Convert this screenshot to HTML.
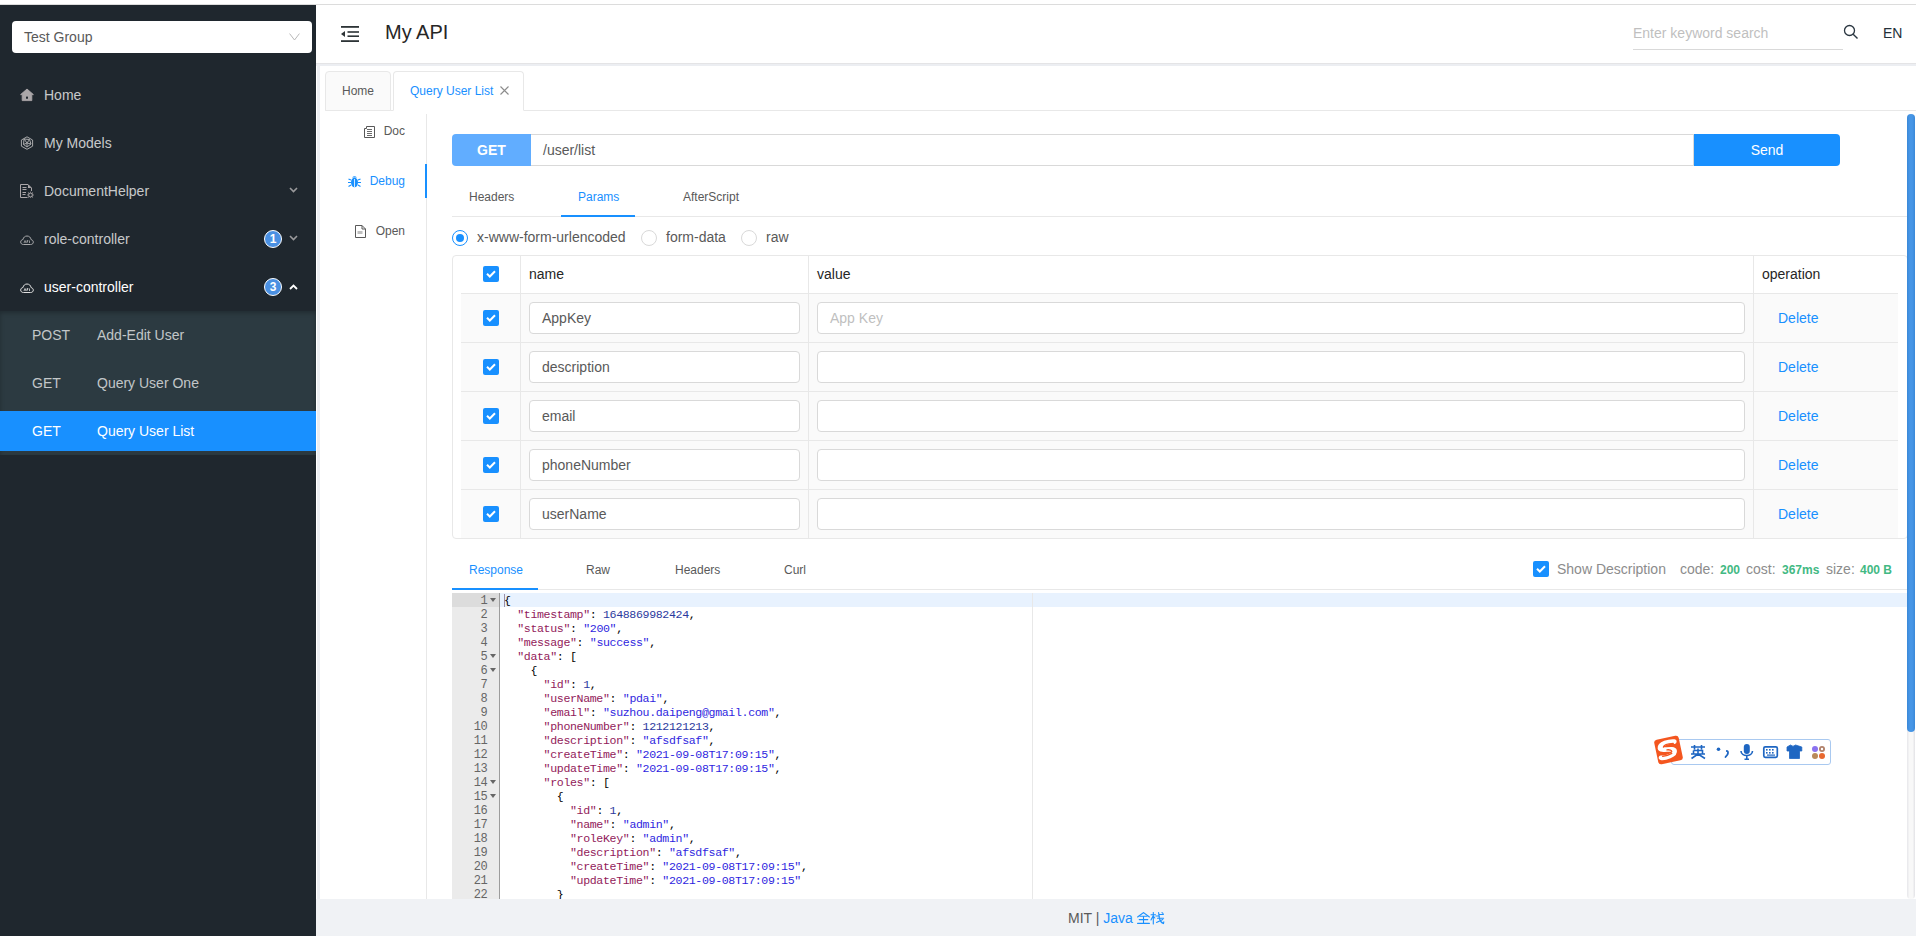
<!DOCTYPE html>
<html><head><meta charset="utf-8">
<style>
*{box-sizing:border-box;margin:0;padding:0}
html,body{width:1916px;height:936px;overflow:hidden;background:#fff;font-family:"Liberation Sans",sans-serif;color:#595959}
.abs{position:absolute}
#topline{left:0;top:4px;width:1916px;height:1px;background:#dcdcdc}
#side{left:0;top:5px;width:316px;height:931px;background:#1f272e}
#sel{left:12px;top:16px;width:300px;height:32px;background:#fff;border-radius:4px;font-size:14px;color:#595959;line-height:32px;padding-left:12px}
#sel svg{position:absolute;right:12px;top:12px}
.mi{position:absolute;left:0;width:316px;height:40px;line-height:40px;font-size:14px;color:rgba(255,255,255,0.76)}
.mi .ic{position:absolute;left:20px;top:13px;width:14px;height:14px}
.mi .tx{position:absolute;left:44px;top:0}
.mi .arr{position:absolute;left:289px;top:16px}
.badge{position:absolute;left:264px;top:11px;width:18px;height:18px;border-radius:50%;background:#4a90e2;border:1px solid #fff;color:#fff;font-size:12px;line-height:16px;text-align:center;font-weight:bold}
#sub{left:0;top:307px;width:316px;height:144px;background:#2c3a41;box-shadow:inset 0 2px 4px rgba(0,0,0,0.25)}
.si{position:absolute;left:0;width:316px;height:40px;line-height:40px;font-size:14px;color:rgba(255,255,255,0.72)}
.si .m{position:absolute;left:32px}
.si .nm{position:absolute;left:97px}
.si.act{background:#1890ff;color:#fff}
#header{left:316px;top:5px;width:1600px;height:58px;background:#fff}
#gb1{left:316px;top:63px;width:1600px;height:3px;background:#eceef2;border-top:1px solid #e4e4e6}
#gb2{left:317px;top:64px;width:3px;height:835px;background:#eceef2}
#footer{left:316px;top:899px;width:1600px;height:37px;background:#f0f2f5;font-size:14px;text-align:center;line-height:37px;color:#595959}

#hdr-icon{left:341px;top:26px}
#title{left:385px;top:18px;font-size:20px;color:#262626;line-height:28px}
#search{left:1633px;top:22px;width:210px;height:28px;border-bottom:1px solid #d9d9d9;font-size:14px;color:#bfbfbf;line-height:22px}
#sicon{left:1843px;top:24px}
#lang{left:1883px;top:24px;font-size:14px;color:#24303a;line-height:18px}
#tabbar-line{left:325px;top:110px;width:1591px;height:1px;background:#e8e8e8}
.ptab{position:absolute;top:71px;height:40px;border:1px solid #e8e8e8;border-radius:4px 4px 0 0;font-size:12px;line-height:38px;text-align:center}
#vdiv{left:426px;top:114px;width:1px;height:785px;background:#e8e8e8}
.dtab{position:absolute;left:320px;width:106px;height:34px;line-height:34px;font-size:12px;text-align:right;padding-right:21px;color:#595959}
.dtab svg{position:absolute;top:11px}
#inkbar{left:425px;top:164px;width:2px;height:34px;background:#1890ff}
#get{left:452px;top:134px;width:79px;height:32px;background:#61adff;border-radius:4px 0 0 4px;color:#fff;font-weight:bold;font-size:14px;text-align:center;line-height:32px}
#url{left:531px;top:134px;width:1163px;height:32px;border:1px solid #d9d9d9;border-left:none;font-size:14px;color:#595959;line-height:30px;padding-left:12px}
#send{left:1694px;top:134px;width:146px;height:32px;background:#1890ff;border-radius:0 4px 4px 0;color:#fff;font-size:14px;text-align:center;line-height:32px}
.rtab{position:absolute;font-size:12px;line-height:16px;color:#595959}
#pline{left:452px;top:216px;width:1455px;height:1px;background:#e8e8e8}
#pink{left:561px;top:215px;width:74px;height:2px;background:#1890ff}
.radio{position:absolute;top:230px;width:16px;height:16px;border:1px solid #d9d9d9;border-radius:50%;background:#fff}
.radio.on{border-color:#1890ff}
.radio.on:after{content:"";position:absolute;left:3px;top:3px;width:8px;height:8px;border-radius:50%;background:#1890ff}
.rlab{position:absolute;top:228px;font-size:14px;line-height:18px;color:#595959}
#scroll{left:1907px;top:114px;width:8px;height:785px;background:linear-gradient(to right,#e6e6ea,#f8f8f8 30%,#f8f8f8 70%,#e2e2e6);border-radius:4px}
#thumb{left:1907px;top:114px;width:8px;height:618px;background:linear-gradient(to right,#3a88d8,#4796e6 35%,#4796e6 65%,#3a88d8);border-radius:4px}

#tbl{left:452px;top:255px;width:1456px;height:284px;border:1px solid #e8e8e8;border-radius:4px;background:#fff}
.cdiv{position:absolute;width:1px;background:#e8e8e8}
.hrow{position:absolute;left:452px;height:1px;background:#e8e8e8}
.body{position:absolute;left:461px;width:1437px;height:48px;background:#fafafa}
.cb{position:absolute;left:483px;width:16px;height:16px;background:#1890ff;border-radius:2px}
.cb svg{position:absolute;left:3px;top:4px}
.th{position:absolute;top:266px;font-size:14px;line-height:16px;color:#262626}
.inp{position:absolute;height:32px;border:1px solid #d9d9d9;border-radius:4px;background:#fff;font-size:14px;line-height:30px;padding-left:12px;color:#595959}
.del{position:absolute;left:1778px;font-size:14px;line-height:16px;color:#1890ff}

#rline{left:452px;top:589px;width:1455px;height:1px;background:#e8e8e8}
#rink{left:452px;top:588px;width:86px;height:2px;background:#1890ff}
.stat{position:absolute;top:561px;font-size:14px;line-height:16px;color:#8c8c8c}
.stat.grn{color:#42b983;font-weight:bold;font-size:12px;top:562px}
#editor{left:452px;top:593px;width:1455px;height:306px;background:#fff;overflow:hidden}
#gutter{position:absolute;left:0;top:0;width:48px;height:306px;background:#ebebeb;border-right:1px solid #9c9c9c}
#pm{position:absolute;left:580px;top:0;width:1px;height:306px;background:#e8e8e8}
#actl{position:absolute;left:48px;top:0;width:1407px;height:14px;background:#e8f2fe}
#actg{position:absolute;left:0;top:0;width:47px;height:14px;background:#dcdcdc}
.ln{position:absolute;left:0;width:35px;margin-top:1px;text-align:right;font-family:"Liberation Mono",monospace;font-size:12px;letter-spacing:-0.6px;line-height:14px;color:#666}
.fold{position:absolute;left:38px;width:0;height:0;border-left:3px solid transparent;border-right:3px solid transparent;border-top:4px solid #666}
.cl{position:absolute;left:52px;margin-top:1px;white-space:pre;font-family:"Liberation Mono",monospace;font-size:11.6px;line-height:14px;color:#000;letter-spacing:-0.36px}
.jk{color:#921a5a}.js{color:#2f1fe0}.jn{color:#2b3a9e}
</style></head><body>
<div id="topline" class="abs"></div>
<div id="side" class="abs">
  <div id="sel" class="abs">Test Group
    <svg width="11" height="8" viewBox="0 0 11 8"><path d="M0.6 0.6 L5.5 7 L10.4 0.6" fill="none" stroke="#b8b8b8" stroke-width="1"/></svg>
  </div>
  <div class="mi" style="top:70px"><svg class="ic" viewBox="0 0 14 14"><path d="M7 1 L0.6 6.6 L2.2 6.6 L2.2 12.6 L11.8 12.6 L11.8 6.6 L13.4 6.6 Z" fill="#aba7a9" stroke="#aba7a9" stroke-width="0.9" stroke-linejoin="round"/><rect x="6" y="8.6" width="2" height="2.2" rx="0.6" fill="#1f272e"/></svg><span class="tx">Home</span></div>
  <div class="mi" style="top:118px"><svg class="ic" viewBox="0 0 14 14"><g fill="none" stroke="#a8a9ab" stroke-width="1"><path d="M7 0.8 L12.6 4 L12.6 10.2 L7 13.3 L1.4 10.2 L1.4 4 Z"/><path d="M4 3 L9.5 3.5 L11 8 L7 11 L3.5 8.5 Z"/><path d="M4 3 L7 7 L9.5 3.5 M7 7 L7 11 M3.5 8.5 L7 7 L11 8"/></g></svg><span class="tx">My Models</span></div>
  <div class="mi" style="top:166px"><svg class="ic" viewBox="0 0 14 14"><g fill="none" stroke="#aba7a9" stroke-width="1"><path d="M7.5 13.5 L0.5 13.5 L0.5 0.5 L8 0.5 L11.5 4 L11.5 7"/><path d="M2.5 3.5 L6.5 3.5 M2.5 5.5 L6.5 5.5 M2.5 8.5 L6 8.5 M2.5 10.5 L5.5 10.5"/><circle cx="10.5" cy="11" r="1.9"/><path d="M10.5 7.8 L10.5 8.6 M10.5 13.4 L10.5 14.2 M7.3 11 L8.1 11 M12.9 11 L13.7 11 M8.2 8.7 L8.8 9.3 M12.2 12.7 L12.8 13.3 M8.2 13.3 L8.8 12.7 M12.2 9.3 L12.8 8.7" stroke-width="1.1"/></g><path d="M8 0.5 L11.5 4 L8 4 Z" fill="#aba7a9"/></svg><span class="tx">DocumentHelper</span><svg class="arr" width="9" height="6" viewBox="0 0 9 6"><path d="M1 1 L4.5 4.5 L8 1" fill="none" stroke="#9a9a9c" stroke-width="1.6"/></svg></div>
  <div class="mi" style="top:214px"><svg class="ic" viewBox="0 0 14 14" style="top:14px"><path d="M3.5 11.5 C1.5 11.5 0.7 10.3 0.7 9 C0.7 7.6 1.8 6.6 3 6.6 C3.3 4.3 5 3 7 3 C9.2 3 10.8 4.5 11 6.6 C12.3 6.8 13.3 7.8 13.3 9.1 C13.3 10.4 12.4 11.5 10.6 11.5 Z" fill="none" stroke="#a8a9ab" stroke-width="1"/><path d="M4 10 L5 7.5 L6 10 M7 10 L7 7.5 L8.2 7.8 L7 8.8 M9.5 7.5 L9.5 10" fill="none" stroke="#a8a9ab" stroke-width="0.8"/></svg><span class="tx">role-controller</span><div class="badge">1</div><svg class="arr" width="9" height="6" viewBox="0 0 9 6"><path d="M1 1 L4.5 4.5 L8 1" fill="none" stroke="#9a9a9c" stroke-width="1.6"/></svg></div>
  <div class="mi" style="top:262px;color:#fff"><svg class="ic" viewBox="0 0 14 14" style="top:14px"><path d="M3.5 11.5 C1.5 11.5 0.7 10.3 0.7 9 C0.7 7.6 1.8 6.6 3 6.6 C3.3 4.3 5 3 7 3 C9.2 3 10.8 4.5 11 6.6 C12.3 6.8 13.3 7.8 13.3 9.1 C13.3 10.4 12.4 11.5 10.6 11.5 Z" fill="none" stroke="#e0e0e0" stroke-width="1"/><path d="M4 10 L5 7.5 L6 10 M7 10 L7 7.5 L8.2 7.8 L7 8.8 M9.5 7.5 L9.5 10" fill="none" stroke="#e0e0e0" stroke-width="0.8"/></svg><span class="tx">user-controller</span><div class="badge">3</div><svg class="arr" width="9" height="6" viewBox="0 0 9 6" style="top:17px"><path d="M1 5 L4.5 1.5 L8 5" fill="none" stroke="#ffffff" stroke-width="1.8"/></svg></div>
  <div id="sub" class="abs" style="top:306px;height:144px">
    <div class="si" style="top:4px"><span class="m">POST</span><span class="nm">Add-Edit User</span></div>
    <div class="si" style="top:52px"><span class="m">GET</span><span class="nm">Query User One</span></div>
    <div class="si act" style="top:100px"><span class="m">GET</span><span class="nm">Query User List</span></div>
  </div>
</div>
<div id="header" class="abs"></div>
<div id="gb1" class="abs"></div>
<div id="gb2" class="abs"></div>

<svg id="hdr-icon" class="abs" width="18" height="16" viewBox="0 0 18 16"><g fill="#2d3436"><rect x="0" y="0" width="18" height="1.8"/><rect x="6.5" y="5.2" width="11.5" height="1.6"/><rect x="6.5" y="9.4" width="11.5" height="1.6"/><rect x="0" y="14.2" width="18" height="1.8"/><path d="M0 8 L4 5 L4 11 Z"/></g></svg>
<div id="title" class="abs">My API</div>
<div id="search" class="abs">Enter keyword search</div>
<svg id="sicon" class="abs" width="16" height="16" viewBox="0 0 16 16"><circle cx="6.5" cy="6.5" r="5" fill="none" stroke="#2a3640" stroke-width="1.3"/><path d="M10.2 10.2 L14.5 14.5" stroke="#2a3640" stroke-width="1.4"/></svg>
<div id="lang" class="abs">EN</div>
<div id="tabbar-line" class="abs"></div>
<div class="ptab" style="left:325px;width:66px;background:#fafafa;color:#595959">Home</div>
<div class="ptab" style="left:393px;width:131px;background:#fff;color:#1890ff;border-bottom-color:#fff;text-align:left;padding-left:16px">Query User List <svg width="9" height="9" viewBox="0 0 9 9" style="margin-left:3px"><path d="M0.5 0.5 L8.5 8.5 M8.5 0.5 L0.5 8.5" stroke="#8c8c8c" stroke-width="1.1"/></svg></div>
<div id="vdiv" class="abs"></div>
<div class="dtab" style="top:114px">Doc<svg style="left:44px;top:12px" width="11" height="12" viewBox="0 0 11 12"><g fill="none" stroke="#595959" stroke-width="1"><path d="M2.5 0.5 L10.5 0.5 L10.5 11.5 L0.5 11.5 L0.5 2.5 L2.5 2.5 Z"/><path d="M3 3.5 L8 3.5 M3 5.5 L8 5.5 M3 7.5 L8 7.5 M3 9.5 L8 9.5" stroke-width="0.9"/></g></svg></div>
<div class="dtab" style="top:164px;color:#1890ff">Debug<svg style="left:28px;top:11px" width="13" height="13" viewBox="0 0 13 13"><g fill="#1890ff"><ellipse cx="6.5" cy="7.5" rx="3.5" ry="4.8"/><path d="M4 2.5 Q6.5 0 9 2.5 Z"/></g><g stroke="#1890ff" stroke-width="1.2" fill="none"><path d="M0.5 4 L3 5 M12.5 4 L10 5 M0 7.5 L3 7.5 M13 7.5 L10 7.5 M0.5 11.5 L3 10 M12.5 11.5 L10 10"/></g><path d="M6.5 4 L6.5 12" stroke="#fff" stroke-width="0.8"/></svg></div>
<div class="dtab" style="top:214px">Open<svg style="left:35px" width="11" height="13" viewBox="0 0 11 13"><g fill="none" stroke="#595959" stroke-width="1"><path d="M0.5 0.5 L7 0.5 L10.5 4 L10.5 12.5 L0.5 12.5 Z"/><path d="M7 0.5 L7 4 L10.5 4"/></g><rect x="2.5" y="6" width="5" height="3" fill="#bfbfbf"/></svg></div>
<div id="inkbar" class="abs"></div>
<div id="get" class="abs">GET</div>
<div id="url" class="abs">/user/list</div>
<div id="send" class="abs">Send</div>
<div class="rtab" style="left:469px;top:189px">Headers</div>
<div class="rtab" style="left:578px;top:189px;color:#1890ff">Params</div>
<div class="rtab" style="left:683px;top:189px">AfterScript</div>
<div id="pline" class="abs"></div>
<div id="pink" class="abs"></div>
<div class="radio on" style="left:452px"></div><div class="rlab" style="left:477px">x-www-form-urlencoded</div>
<div class="radio" style="left:641px"></div><div class="rlab" style="left:666px">form-data</div>
<div class="radio" style="left:741px"></div><div class="rlab" style="left:766px">raw</div>
<div id="tbl" class="abs"></div>
<div class="body" style="top:294px"></div>
<div class="body" style="top:343px"></div>
<div class="body" style="top:392px"></div>
<div class="body" style="top:441px"></div>
<div class="body" style="top:490px"></div>
<div class="hrow" style="left:461px;top:293px;width:1437px"></div>
<div class="hrow" style="left:461px;top:342px;width:1437px"></div>
<div class="hrow" style="left:461px;top:391px;width:1437px"></div>
<div class="hrow" style="left:461px;top:440px;width:1437px"></div>
<div class="hrow" style="left:461px;top:489px;width:1437px"></div>
<div class="cdiv" style="left:520px;top:256px;height:282px"></div>
<div class="cdiv" style="left:808px;top:256px;height:282px"></div>
<div class="cdiv" style="left:1753px;top:256px;height:282px"></div>
<div class="cb" style="top:266px"><svg width="10" height="8" viewBox="0 0 10 8"><path d="M1 3.8 L3.8 6.5 L9 1.2" fill="none" stroke="#fff" stroke-width="2"/></svg></div>
<div class="th" style="left:529px">name</div><div class="th" style="left:817px">value</div><div class="th" style="left:1762px">operation</div>
<div class="cb" style="top:310px"><svg width="10" height="8" viewBox="0 0 10 8"><path d="M1 3.8 L3.8 6.5 L9 1.2" fill="none" stroke="#fff" stroke-width="2"/></svg></div>
<div class="inp" style="left:529px;top:302px;width:271px">AppKey</div>
<div class="inp" style="left:817px;top:302px;width:928px"><span style="color:#bfbfbf">App Key</span></div>
<div class="del" style="top:310px">Delete</div>
<div class="cb" style="top:359px"><svg width="10" height="8" viewBox="0 0 10 8"><path d="M1 3.8 L3.8 6.5 L9 1.2" fill="none" stroke="#fff" stroke-width="2"/></svg></div>
<div class="inp" style="left:529px;top:351px;width:271px">description</div>
<div class="inp" style="left:817px;top:351px;width:928px"></div>
<div class="del" style="top:359px">Delete</div>
<div class="cb" style="top:408px"><svg width="10" height="8" viewBox="0 0 10 8"><path d="M1 3.8 L3.8 6.5 L9 1.2" fill="none" stroke="#fff" stroke-width="2"/></svg></div>
<div class="inp" style="left:529px;top:400px;width:271px">email</div>
<div class="inp" style="left:817px;top:400px;width:928px"></div>
<div class="del" style="top:408px">Delete</div>
<div class="cb" style="top:457px"><svg width="10" height="8" viewBox="0 0 10 8"><path d="M1 3.8 L3.8 6.5 L9 1.2" fill="none" stroke="#fff" stroke-width="2"/></svg></div>
<div class="inp" style="left:529px;top:449px;width:271px">phoneNumber</div>
<div class="inp" style="left:817px;top:449px;width:928px"></div>
<div class="del" style="top:457px">Delete</div>
<div class="cb" style="top:506px"><svg width="10" height="8" viewBox="0 0 10 8"><path d="M1 3.8 L3.8 6.5 L9 1.2" fill="none" stroke="#fff" stroke-width="2"/></svg></div>
<div class="inp" style="left:529px;top:498px;width:271px">userName</div>
<div class="inp" style="left:817px;top:498px;width:928px"></div>
<div class="del" style="top:506px">Delete</div>

<div class="rtab" style="left:469px;top:562px;color:#1890ff">Response</div>
<div class="rtab" style="left:586px;top:562px">Raw</div>
<div class="rtab" style="left:675px;top:562px">Headers</div>
<div class="rtab" style="left:784px;top:562px">Curl</div>
<div id="rline" class="abs"></div>
<div id="rink" class="abs"></div>
<div class="cb" style="left:1533px;top:561px"><svg width="10" height="8" viewBox="0 0 10 8"><path d="M1 3.8 L3.8 6.5 L9 1.2" fill="none" stroke="#fff" stroke-width="2"/></svg></div>
<div class="stat" style="left:1557px">Show Description</div>
<div class="stat" style="left:1680px">code:</div><div class="stat grn" style="left:1720px">200</div>
<div class="stat" style="left:1746px">cost:</div><div class="stat grn" style="left:1782px">367ms</div>
<div class="stat" style="left:1826px">size:</div><div class="stat grn" style="left:1860px">400 B</div>
<div id="editor" class="abs"><div id="gutter"></div><div id="actg"></div><div id="actl"></div><div id="pm"></div><div style="position:absolute;left:52px;top:1px;width:1px;height:13px;background:#9b8fa8"></div>
<div class="ln" style="top:0px">1</div>
<div class="fold" style="top:5px"></div>
<div class="cl" style="top:0px">{</div>
<div class="ln" style="top:14px">2</div>
<div class="cl" style="top:14px">  <span class="jk">&quot;timestamp&quot;</span>: <span class="jn">1648869982424</span>,</div>
<div class="ln" style="top:28px">3</div>
<div class="cl" style="top:28px">  <span class="jk">&quot;status&quot;</span>: <span class="js">&quot;200&quot;</span>,</div>
<div class="ln" style="top:42px">4</div>
<div class="cl" style="top:42px">  <span class="jk">&quot;message&quot;</span>: <span class="js">&quot;success&quot;</span>,</div>
<div class="ln" style="top:56px">5</div>
<div class="fold" style="top:61px"></div>
<div class="cl" style="top:56px">  <span class="jk">&quot;data&quot;</span>: [</div>
<div class="ln" style="top:70px">6</div>
<div class="fold" style="top:75px"></div>
<div class="cl" style="top:70px">    {</div>
<div class="ln" style="top:84px">7</div>
<div class="cl" style="top:84px">      <span class="jk">&quot;id&quot;</span>: <span class="jn">1</span>,</div>
<div class="ln" style="top:98px">8</div>
<div class="cl" style="top:98px">      <span class="jk">&quot;userName&quot;</span>: <span class="js">&quot;pdai&quot;</span>,</div>
<div class="ln" style="top:112px">9</div>
<div class="cl" style="top:112px">      <span class="jk">&quot;email&quot;</span>: <span class="js">&quot;suzhou.daipeng@gmail.com&quot;</span>,</div>
<div class="ln" style="top:126px">10</div>
<div class="cl" style="top:126px">      <span class="jk">&quot;phoneNumber&quot;</span>: <span class="jn">1212121213</span>,</div>
<div class="ln" style="top:140px">11</div>
<div class="cl" style="top:140px">      <span class="jk">&quot;description&quot;</span>: <span class="js">&quot;afsdfsaf&quot;</span>,</div>
<div class="ln" style="top:154px">12</div>
<div class="cl" style="top:154px">      <span class="jk">&quot;createTime&quot;</span>: <span class="js">&quot;2021-09-08T17:09:15&quot;</span>,</div>
<div class="ln" style="top:168px">13</div>
<div class="cl" style="top:168px">      <span class="jk">&quot;updateTime&quot;</span>: <span class="js">&quot;2021-09-08T17:09:15&quot;</span>,</div>
<div class="ln" style="top:182px">14</div>
<div class="fold" style="top:187px"></div>
<div class="cl" style="top:182px">      <span class="jk">&quot;roles&quot;</span>: [</div>
<div class="ln" style="top:196px">15</div>
<div class="fold" style="top:201px"></div>
<div class="cl" style="top:196px">        {</div>
<div class="ln" style="top:210px">16</div>
<div class="cl" style="top:210px">          <span class="jk">&quot;id&quot;</span>: <span class="jn">1</span>,</div>
<div class="ln" style="top:224px">17</div>
<div class="cl" style="top:224px">          <span class="jk">&quot;name&quot;</span>: <span class="js">&quot;admin&quot;</span>,</div>
<div class="ln" style="top:238px">18</div>
<div class="cl" style="top:238px">          <span class="jk">&quot;roleKey&quot;</span>: <span class="js">&quot;admin&quot;</span>,</div>
<div class="ln" style="top:252px">19</div>
<div class="cl" style="top:252px">          <span class="jk">&quot;description&quot;</span>: <span class="js">&quot;afsdfsaf&quot;</span>,</div>
<div class="ln" style="top:266px">20</div>
<div class="cl" style="top:266px">          <span class="jk">&quot;createTime&quot;</span>: <span class="js">&quot;2021-09-08T17:09:15&quot;</span>,</div>
<div class="ln" style="top:280px">21</div>
<div class="cl" style="top:280px">          <span class="jk">&quot;updateTime&quot;</span>: <span class="js">&quot;2021-09-08T17:09:15&quot;</span></div>
<div class="ln" style="top:294px">22</div>
<div class="cl" style="top:294px">        }</div>
</div>
<div id="scroll" class="abs"></div>
<div id="thumb" class="abs"></div>
<div id="footer" class="abs"></div>
<div class="abs" style="left:1068px;top:910px;font-size:14px;line-height:16px;color:#595959">MIT | <span style="color:#1890ff">Java</span></div>
<svg class="abs" style="left:1137px;top:912px" width="28" height="13" viewBox="0 0 28 13"><g fill="none" stroke="#1890ff" stroke-width="1.1" stroke-linecap="round"><path d="M0.6 5 L6.5 0.6 L12.4 5"/><path d="M3 4.3 L10 4.3 M2.2 7.6 L10.8 7.6 M6.5 4.3 L6.5 11.3 M0.6 11.4 L12.4 11.4"/><path d="M14 2.8 L18.5 2.8 M16.3 0.5 L16.3 12 M16.3 3.5 L14 8 M16.3 4.2 L17.8 6"/><path d="M19 4 L22.5 4 M22.2 2.5 L26.4 2.5 M20.5 6.3 L26.6 6.3 M21.6 0.6 L22.4 6.5 Q23.5 10.5 26.5 11.6 L26.8 9.8 M19.5 10.4 L25.8 7.6 M25 0.6 L26 1.4"/></g></svg>
<div class="abs" style="left:1671px;top:739px;width:160px;height:26px;border:1px solid #a9c9f0;border-radius:3px;background:#fff"></div>
<svg class="abs" style="left:1650px;top:732px" width="182" height="36" viewBox="0 0 182 36">
<g transform="rotate(-12 18.5 18)"><rect x="6" y="5.5" width="25" height="25" rx="3" fill="#f4561f"/><path d="M26 11 C21 9.5 11 9.8 10.5 14.5 C10.2 18 24 16.2 24.3 20 C24.6 24.5 13 25.5 9.5 24" fill="none" stroke="#fff" stroke-width="4.6" stroke-linecap="round"/><path d="M24.5 12.6 C20 12 15 12.3 14.2 14 M17 17.5 C20 17.8 21.5 18.8 21.3 20 M21 22 C18 23 14 23.3 11.5 23" fill="none" stroke="#f4561f" stroke-width="1.3" stroke-linecap="round"/></g>
<g fill="none" stroke="#1e66c2" stroke-width="1.6"><path d="M41 15 L55 15 M44.5 13 L44.5 17.5 M51.5 13 L51.5 17.5 M43.5 18.5 L52.5 18.5 L52.5 21.5 M43.5 18.5 L43.5 21.5 M41 22 L55 22 M48 16.5 L48 22 M48 22 L41.5 26.5 M48 22 L55 26.5"/></g>
<circle cx="68.5" cy="17.2" r="1.8" fill="#1e66c2"/><path d="M76.8 19 C78 19 78.5 20.5 77.5 22.5 L75.5 25" fill="none" stroke="#1e66c2" stroke-width="1.8" stroke-linecap="round"/>
<rect x="93.8" y="12" width="6" height="10" rx="3" fill="#1e66c2"/><path d="M91 19 C91 25 102.5 25 102.5 19 M96.8 24 L96.8 26.5 M94.5 27.3 L99 27.3" fill="none" stroke="#1e66c2" stroke-width="1.6"/>
<rect x="113.8" y="14.8" width="13.5" height="10.5" rx="1.5" fill="none" stroke="#1e66c2" stroke-width="1.7"/><g fill="#1e66c2"><rect x="116" y="17" width="1.6" height="1.6"/><rect x="119" y="17" width="1.6" height="1.6"/><rect x="122" y="17" width="1.6" height="1.6"/><rect x="116" y="20" width="1.6" height="1.6"/><rect x="119" y="20" width="1.6" height="1.6"/><rect x="122" y="20" width="1.6" height="1.6"/><rect x="117" y="22.5" width="8" height="1.2"/></g>
<path d="M137 15 L140.5 13 Q143 15.5 145.5 13 L151.8 15 L151.8 19 L149.5 19 L149.5 26.5 L139.5 26.5 L139.5 19 L137 19 Z" fill="#1e66c2" stroke="#1e66c2" stroke-width="0.8" stroke-linejoin="round"/>
<circle cx="165" cy="17" r="3" fill="#8b72f0"/><circle cx="172" cy="17" r="3" fill="#b0806a"/><circle cx="172" cy="17" r="1.2" fill="#fff"/><circle cx="165" cy="24" r="3" fill="#b88a5a"/><circle cx="172" cy="24" r="3" fill="#e8682e"/>
</svg>
</body></html>
